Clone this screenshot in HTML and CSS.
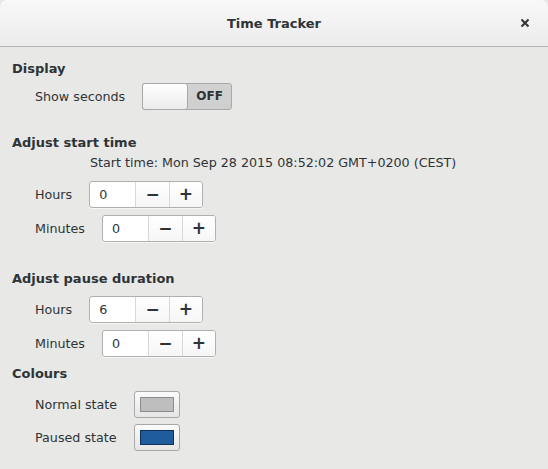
FILE: index.html
```html
<!DOCTYPE html>
<html>
<head>
<meta charset="utf-8">
<link rel="stylesheet" href="styles.css">
</head>
<body>
<div class="window">
  <header class="titlebar">
    <span class="title">Time Tracker</span>
    <span class="close">
      <svg width="10" height="10" viewBox="0 0 10 10"><path d="M1.5 1.5 L8.5 8.5 M8.5 1.5 L1.5 8.5" stroke="#2e3436" stroke-width="2" stroke-linecap="butt"/></svg>
    </span>
  </header>
  <main class="content">
    <div class="heading h-display">Display</div>
    <div class="row r-switch">
      <span class="label">Show seconds</span>
      <div class="switch"><span class="knob"></span><span class="state">OFF</span></div>
    </div>

    <div class="heading h-start">Adjust start time</div>
    <div class="starttime">Start time: Mon Sep 28 2015 08:52:02 GMT+0200 (CEST)</div>
    <div class="row r-first">
      <span class="label">Hours</span>
      <div class="spin"><span class="entry">0</span><span class="btn">&minus;</span><span class="btn">+</span></div>
    </div>
    <div class="row r-next">
      <span class="label">Minutes</span>
      <div class="spin"><span class="entry">0</span><span class="btn">&minus;</span><span class="btn">+</span></div>
    </div>

    <div class="heading h-pause">Adjust pause duration</div>
    <div class="row r-after-heading">
      <span class="label">Hours</span>
      <div class="spin"><span class="entry">6</span><span class="btn">&minus;</span><span class="btn">+</span></div>
    </div>
    <div class="row r-next">
      <span class="label">Minutes</span>
      <div class="spin"><span class="entry">0</span><span class="btn">&minus;</span><span class="btn">+</span></div>
    </div>

    <div class="heading h-colours">Colours</div>
    <div class="row r-after-heading">
      <span class="label">Normal state</span>
      <div class="colorbtn"><span class="swatch swatch-normal"></span></div>
    </div>
    <div class="row r-paused">
      <span class="label">Paused state</span>
      <div class="colorbtn"><span class="swatch swatch-paused"></span></div>
    </div>
  </main>
</div>
</body>
</html>
```
FILE: styles.css
```css
html, body {
  margin: 0;
  padding: 0;
  background: #e8e8e7;
}
body {
  width: 548px;
  height: 469px;
  overflow: hidden;
  font-family: "DejaVu Sans", "Liberation Sans", sans-serif;
  font-size: 12.7px;
  color: #2e3436;
}
.window {
  background: #e8e8e7;
  height: 469px;
}
.titlebar {
  height: 46px;
  border-bottom: 1px solid #b4b4b2;
  background: linear-gradient(to bottom, #f8f8f8, #ececec);
  border-radius: 7px 7px 0 0;
  display: flex;
  align-items: center;
  justify-content: center;
  position: relative;
  box-sizing: content-box;
}
.title {
  font-weight: bold;
  font-size: 13px;
  color: #2e3436;
}
.close {
  position: absolute;
  right: 18px;
  top: 18px;
  width: 10px;
  height: 10px;
  display: flex;
}
.content {
  display: flex;
  flex-direction: column;
  align-items: flex-start;
  padding: 13px 0 0 12px;
}
.heading {
  font-weight: bold;
  font-size: 13px;
  height: 18px;
  line-height: 18px;
}
.row {
  display: flex;
  align-items: center;
  padding-left: 23px;
  height: 27px;
}
.label {
  margin-right: 17px;
  line-height: 18px;
}
.r-switch { margin-top: 5px; }
.h-start { margin-top: 24px; }
.starttime {
  margin-top: 2px;
  margin-left: 78px;
  line-height: 18px;
}
.r-first { margin-top: 9px; }
.r-next { margin-top: 7px; }
.h-pause { margin-top: 28px; }
.r-after-heading { margin-top: 8px; }
.h-colours { margin-top: 8px; }
.r-paused { margin-top: 6px; }

.switch {
  width: 90px;
  height: 27px;
  box-sizing: border-box;
  border: 1px solid #a8a8a6;
  border-radius: 3px;
  background: linear-gradient(to bottom, #d2d2d2, #cfcfcf);
  display: flex;
  position: relative;
}
.knob {
  width: 46px;
  height: 27px;
  margin: -1px 0 0 -1px;
  box-sizing: border-box;
  border: 1px solid #a8a8a6;
  border-radius: 3px;
  background: linear-gradient(to bottom, #ffffff, #ececec);
}
.state {
  flex: 1;
  text-align: center;
  font-weight: bold;
  font-size: 12px;
  line-height: 25px;
  color: #2e3436;
}

.spin {
  display: flex;
  width: 114px;
  height: 27px;
  box-sizing: border-box;
  border: 1px solid #b0b0ae;
  border-radius: 3px;
  background: #ffffff;
  overflow: hidden;
  box-shadow: 0 1px 0 rgba(255,255,255,0.6);
}
.entry {
  width: 46px;
  padding-left: 9px;
  box-sizing: border-box;
  line-height: 25px;
  color: #2e3436;
}
.btn {
  width: 33px;
  border-left: 1px solid #d8d8d6;
  text-align: center;
  line-height: 24px;
  font-size: 17px;
  font-weight: bold;
  color: #2e3436;
  background: linear-gradient(to bottom, #ffffff, #f6f6f6);
}

.colorbtn {
  width: 46px;
  height: 27px;
  box-sizing: border-box;
  border: 1px solid #a8a8a6;
  border-radius: 3px;
  background: linear-gradient(to bottom, #fbfbfb, #e6e6e6);
  display: flex;
  align-items: center;
  justify-content: center;
}
.swatch {
  width: 34px;
  height: 15px;
  box-sizing: border-box;
  border: 1px solid #7a7a7a;
}
.swatch-normal { background: #bebebe; border-color: #8c8c8c; }
.swatch-paused { background: #1f5c9e; border-color: #0f3157; }
```
